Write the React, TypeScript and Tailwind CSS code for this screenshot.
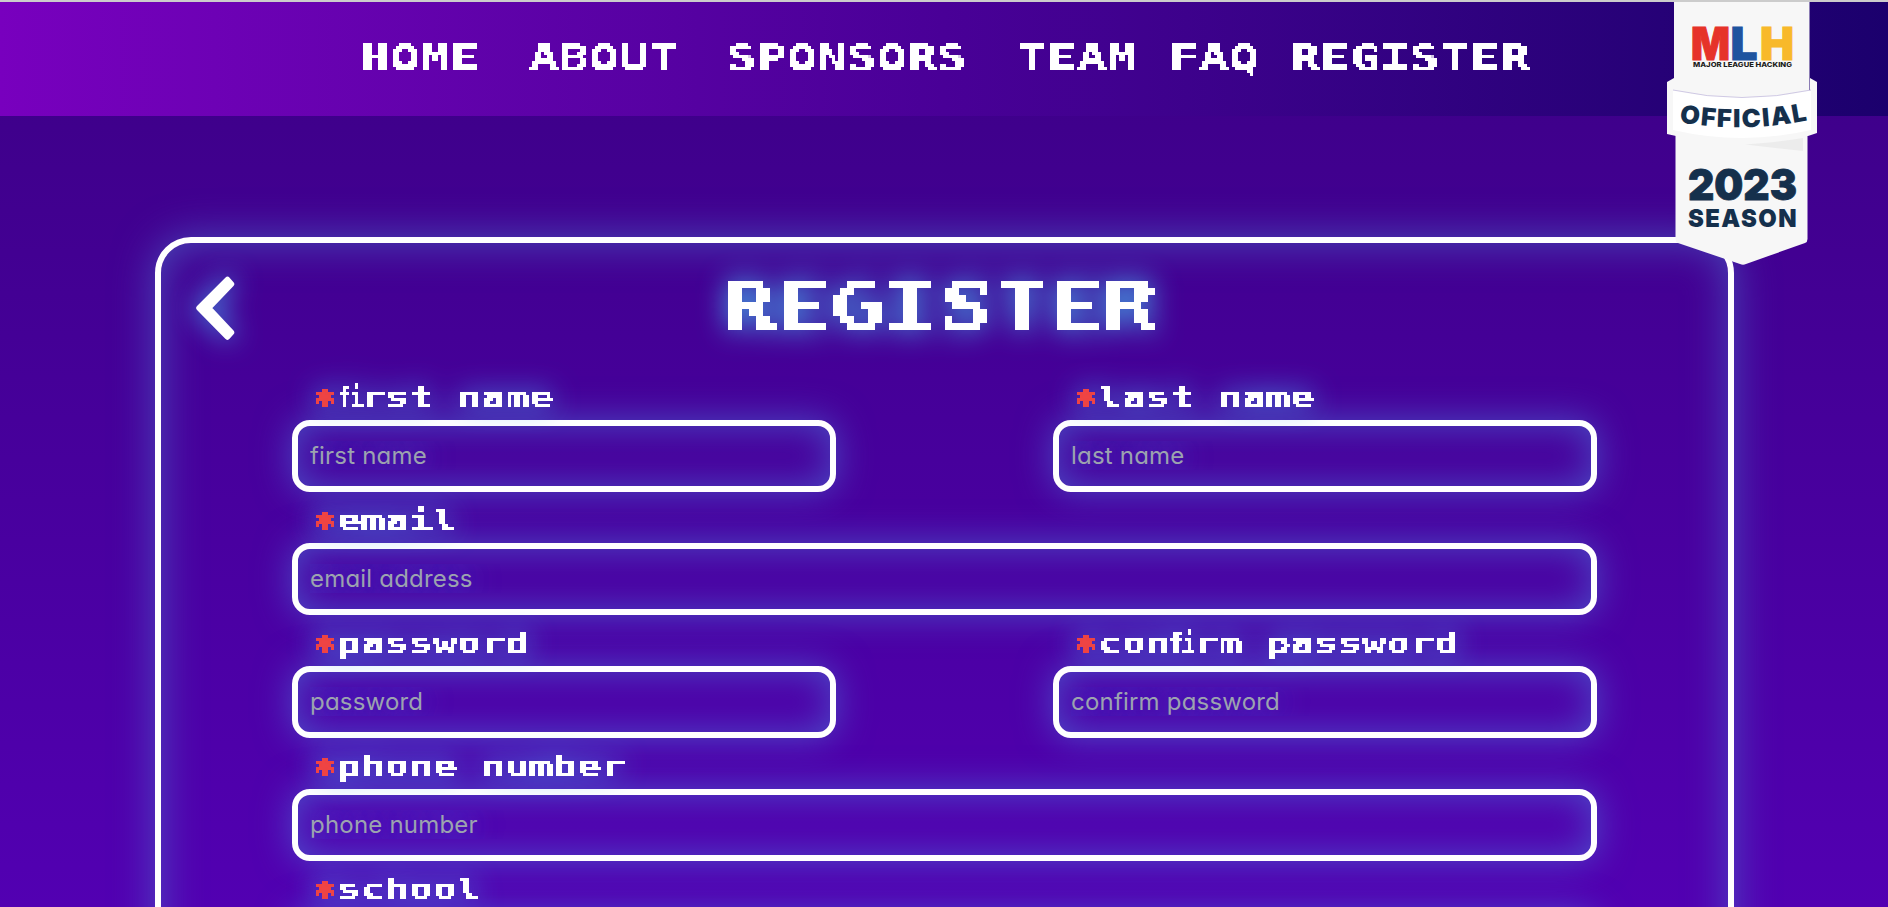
import type { ReactNode } from "react";

const pixel = "font-['DejaVu_Sans_Mono',monospace] font-bold whitespace-pre";

function PixelFilter({ id, size }: { id: string; size: number }) {
  const radius = (size - 1) / 2;
  return (
    <filter id={id} x="0" y="0" width="100%" height="100%" primitiveUnits="userSpaceOnUse" colorInterpolationFilters="sRGB">
      <feFlood x={Math.floor(radius)} y={Math.floor(radius)} width="1" height="1" />
      <feComposite x="0" y="0" width={size} height={size} />
      <feTile result="grid" />
      <feComposite in="SourceGraphic" in2="grid" operator="in" />
      <feComponentTransfer>
        <feFuncA type="linear" slope="200" intercept="-80" />
      </feComponentTransfer>
      <feMorphology operator="dilate" radius={radius} />
    </filter>
  );
}

function NavLink({ label, box }: { label: string; box: string }) {
  return (
    <a href="#" className={`block shrink-0 ${box}`}>
      <span className="block [filter:url(#pixel-3)]">
        <span className={`inline-block origin-left scale-x-[1.384] text-[36px] leading-[42px] text-white ${pixel}`}>
          {label}
        </span>
      </span>
    </a>
  );
}

function Ligature() {
  return (
    <span className="inline-block w-[17px]">
      <span className="inline-block origin-left scale-x-[0.58] tracking-[-2px] [-webkit-text-stroke:0.7px_white]">fi</span>
    </span>
  );
}

function Field({ label, placeholder, wide }: { label: ReactNode; placeholder: string; wide?: boolean }) {
  return (
    <label className={`flex flex-col ${wide ? "col-span-2" : ""}`}>
      <span className="flex h-[51px] items-start pt-[11px] pl-[21px] drop-shadow-[0_0_14px_rgba(70,165,240,1)]">
        <span className="block w-[420px] [filter:url(#pixel-3)]">
          <span className={`inline-block origin-left scale-x-[1.424] text-[28px] leading-[36px] text-white ${pixel}`}>
            <span className="inline-block translate-y-[5.5px] scale-y-[1.25] text-[#ef4444] [-webkit-text-stroke:0.7px_#ef4444]">*</span>
            {label}
          </span>
        </span>
      </span>
      <input
        placeholder={placeholder}
        className="h-[72px] w-full rounded-[18px] border-[6px] border-white bg-transparent px-[12px] pb-[2px] font-['Inter',sans-serif] text-[24px] tracking-[0.2px] text-white shadow-[0_0_36px_rgba(75,110,215,0.65),inset_0_0_36px_rgba(75,110,215,0.65)] outline-none placeholder:text-[#9ca3af] [font-feature-settings:'cv11'] [text-shadow:0_0_30px_rgba(75,120,235,1)]"
      />
    </label>
  );
}

function SeasonBadge() {
  return (
    <svg
      className="absolute top-[2px] left-[1667px] z-10 h-[264px] w-[150px]"
      viewBox="1667 2 150 264"
      fontFamily="Inter, sans-serif"
      fontWeight="900"
    >
      <path d="M1674 2H1809.5V120H1807.5V239Q1807.5 242 1805 243L1746 264Q1743 265.500 1740 264L1678 243Q1675.500 242 1675.500 239V120H1674Z" fill="#f7f7f7" />
      <path d="M1667 82L1674 78V90Q1742 104 1810 90V78L1817 82V133L1808 136H1676L1667 134Z" fill="#f7f7f7" />
      <path d="M1673 90.500Q1742 105 1811 90.500V130Q1742 146 1673 130Z" fill="#ffffff" />
      <path d="M1673 90Q1742 105 1811 90" fill="none" stroke="#a79bd0" strokeWidth="0.5" />
      <path d="M1745 144.500Q1780 142 1803 138V151Z" fill="#ececec" />
      <g fontSize="45" strokeWidth="1">
        <text x="1691" y="59.500" textLength="39" lengthAdjust="spacingAndGlyphs" fill="#e63329" stroke="#e63329">M</text>
        <text x="1730.500" y="59.500" textLength="27" lengthAdjust="spacingAndGlyphs" fill="#1e549f" stroke="#1e549f">L</text>
        <text x="1760" y="59.500" textLength="34" lengthAdjust="spacingAndGlyphs" fill="#f8b92a" stroke="#f8b92a">H</text>
      </g>
      <text x="1693" y="67.200" fontSize="6.500" fontWeight="800" textLength="99" lengthAdjust="spacingAndGlyphs" fill="#1d1d1b">MAJOR LEAGUE HACKING</text>
      <path id="ribbon" d="M1679 122Q1743 134 1814 119" fill="none" />
      <text fontSize="25" fill="#15304c" letterSpacing="1.500">
        <textPath href="#ribbon" textLength="131" lengthAdjust="spacingAndGlyphs">OFFICIAL</textPath>
      </text>
      <text x="1688" y="200" fontSize="42" textLength="109" lengthAdjust="spacingAndGlyphs" fill="#15304c" stroke="#15304c" strokeWidth="0.8">2023</text>
      <text x="1688" y="227" fontSize="25" letterSpacing="1.500" textLength="110" lengthAdjust="spacingAndGlyphs" fill="#15304c">SEASON</text>
    </svg>
  );
}

export default function App() {
  return (
    <div className="relative h-[907px] w-full overflow-hidden bg-linear-to-b from-[#3c0086] to-[#5200b2]">
      <svg className="absolute size-0" aria-hidden="true">
        <defs>
          <PixelFilter id="pixel-3" size={3} />
          <PixelFilter id="pixel-7" size={7} />
        </defs>
      </svg>
      <div className="h-[2px] bg-[#cccccc]" />
      <header className="h-[114px] bg-linear-to-r from-[#7800be] via-[#490097] to-[#1b006d]">
        <nav className="flex pt-[35px] pl-[360px]">
          <NavLink label="HOME" box="w-[169px]" />
          <NavLink label="ABOUT" box="w-[198px]" />
          <NavLink label="SPONSORS" box="w-[290px]" />
          <NavLink label="TEAM" box="w-[152px]" />
          <NavLink label="FAQ" box="w-[121px]" />
          <NavLink label="REGISTER" box="w-[242px]" />
        </nav>
      </header>
      <SeasonBadge />
      <main className="px-[155px] pt-[121px]">
        <section className="h-[900px] w-[1579px] rounded-[36px] border-[6px] border-white shadow-[0_0_42px_rgba(75,110,205,0.65),inset_0_0_42px_rgba(75,110,205,0.65)]">
          <div className="flex h-[126px] pt-[31px]">
            <button aria-label="Back" className="mt-px ml-[33px] h-[68px] w-[46px]">
              <svg viewBox="0 0 46 68" className="h-[68px] w-[46px] overflow-visible drop-shadow-[0_0_14px_rgba(70,175,245,1)]">
                <path d="M5 33L33.500 4.500L37.500 9L14.500 33L37.500 57.500L33.500 62Z" fill="white" stroke="white" strokeWidth="5.500" strokeLinejoin="round" />
              </svg>
            </button>
            <h1 className="ml-[481px] h-[76px] w-[446px] drop-shadow-[0_0_14px_rgba(68,185,241,1)]">
              <span className="block [filter:url(#pixel-7)]">
                <span className={`inline-block origin-left scale-x-[1.395] text-[65px] leading-[66px] text-white ${pixel}`}>
                  REGISTER
                </span>
              </span>
            </h1>
          </div>
          <form className="ml-[131px] grid w-[1305px] grid-cols-[544px_544px] justify-between">
            <Field label={<><Ligature />rst name</>} placeholder="first name" />
            <Field label="last name" placeholder="last name" />
            <Field label="email" placeholder="email address" wide />
            <Field label="password" placeholder="password" />
            <Field label={<>con<Ligature />rm password</>} placeholder="confirm password" />
            <Field label="phone number" placeholder="phone number" wide />
            <Field label="school" placeholder="school" wide />
          </form>
        </section>
      </main>
    </div>
  );
}
